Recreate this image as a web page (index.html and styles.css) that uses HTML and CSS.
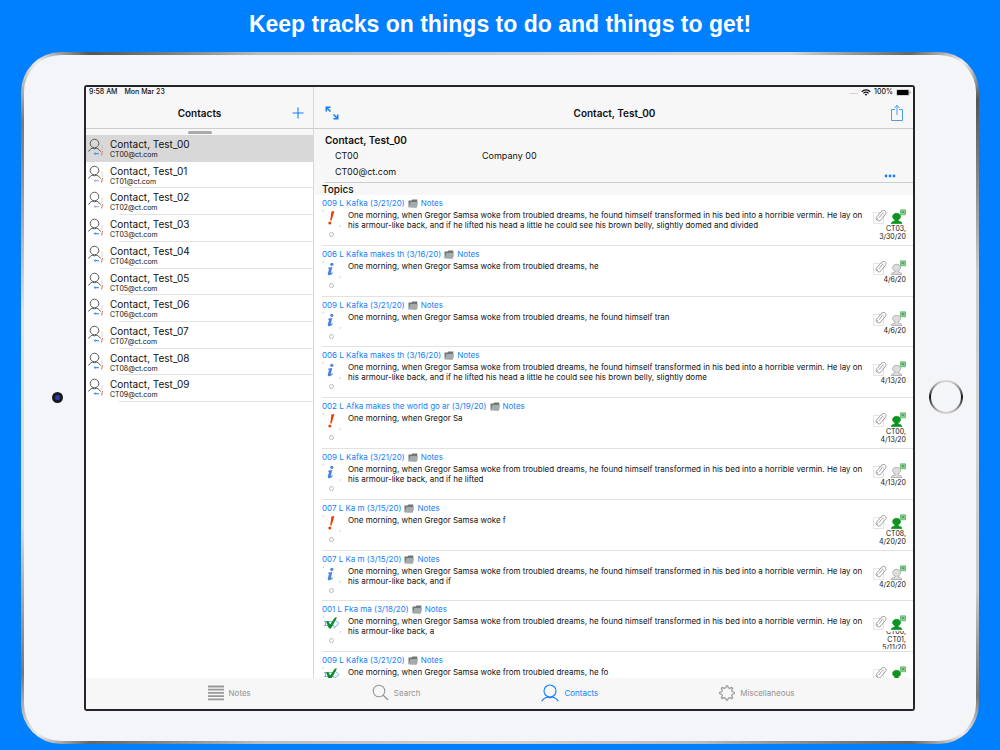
FILE: index.html
```html
<!DOCTYPE html>
<html lang="en">
<head>
<meta charset="utf-8">
<meta name="viewport" content="width=device-width, initial-scale=1">
<title>Contacts</title>
<link rel="stylesheet" href="styles.css">
</head>
<body>
<svg class="sprite" aria-hidden="true">
  <symbol id="contact" viewBox="0 0 17 20">
    <g fill="none" stroke="#4a4a4a" stroke-width="0.9"><circle cx="6.5" cy="5.500" r="4.300"/><path d="M.5 13.500c1.500-2.600 3.500-3.300 4.800-3.500M12.500 13.500c-1.500-2.600-3.500-3.300-4.800-3.500M4.800 10.300l1.700.6 1.700-.6"/></g>
    <path d="M14 7v5" stroke="#aaa" stroke-width=".5"/>
    <path d="M14.500 13l-1 4.500" stroke="#f4714f" stroke-width="1.100"/>
    <path d="M5.500 15.500l2-1.500v1H11v1.200H7.500v1z" fill="currentColor"/>
  </symbol>
  <symbol id="folder" viewBox="0 0 10 9"><path d="M.5 8V1.500h3l.8-1h5V7l-1 1.500z" fill="#6f7678"/><path d="M.5 8.500L2.500 3H10L8.500 8.500z" fill="#a4abad"/></symbol>
  <symbol id="urgent" viewBox="0 0 26 30"><path d="M1 3V1.500L2 1" fill="none" stroke="#bbb" stroke-width=".6"/><path d="M9.400 2.500l3-.5-2.800 9.500H8.200z" fill="#f23a08"/><circle cx="7.800" cy="14" r="1.500" fill="#f23a08"/><path d="M17 18l1.500-1v-1" fill="none" stroke="#bbb" stroke-width=".6"/><circle cx="9.500" cy="25.500" r="2" fill="none" stroke="#aaa" stroke-width=".8"/></symbol>
  <symbol id="info" viewBox="0 0 26 30"><path d="M1 3V1.500L2 1" fill="none" stroke="#bbb" stroke-width=".6"/><circle cx="9.800" cy="4.300" r="1.600" fill="#4b83dd"/><path d="M6.500 7.600L10.300 7 8.800 13.300l1.900-1 .2.800C9.500 14.700 8 15.500 6.700 15.300c-1.200-.2-1-1.400-.7-2.500l1.100-4.100H6z" fill="#4b83dd"/><path d="M17 18l1.500-1v-1" fill="none" stroke="#bbb" stroke-width=".6"/><circle cx="9.500" cy="25.500" r="2" fill="none" stroke="#aaa" stroke-width=".8"/></symbol>
  <symbol id="done" viewBox="0 0 26 30"><path d="M1 3V1.500L2 1" fill="none" stroke="#bbb" stroke-width=".6"/><path d="M2 6.500h10V4l5 4.500-5 4.500v-2.500H2M3.500 6.500v4" fill="#f8fbff" stroke="#74a4f0" stroke-width=".9"/><path d="M4 6.500L6.300 6l1.800 3.500L13 2.500h2L9 13.500H7z" fill="#0b8d20"/><path d="M17 18l1.500-1v-1" fill="none" stroke="#bbb" stroke-width=".6"/><circle cx="9.500" cy="25.500" r="2" fill="none" stroke="#aaa" stroke-width=".8"/></symbol>
  <symbol id="clip" viewBox="0 0 14 16"><path d="M.5 3.500h10v11H.5z" fill="none" stroke="#ddd" stroke-width=".8"/><path d="M6 8.800l3.600-4.600M4.200 11.300c-1.400-.8-1.300-2.200-.5-3.300l4.400-5.300c1.200-1.500 3-1.700 4.100-.8 1.100 1 .9 2.500 0 3.700L8 10.800c-1.100 1.300-2.600 1.400-3.300.7-.7-.8-.3-1.700.3-2.500" fill="none" stroke="#888" stroke-width=".8"/></symbol>
  <symbol id="person" viewBox="0 0 16 16"><path d="M1.200 14.500c.3-1.800 2.100-2 3.800-2.500v-1.200C3.200 9.900 2.600 8.900 2.600 7.800 2.600 5.700 4.400 4.300 6.600 4.300s4 1.400 4 3.500c0 1.100-.6 2.100-2.400 3V12c1.700.5 3.500.7 3.800 2.500z" fill="currentColor" stroke="var(--edge)" stroke-width=".7"/><path d="M10.500.8h5v5h-5z" fill="#8bd494" stroke="#52ae60" stroke-width=".7"/><path d="M11.700 2.200h2.600v1.900h-2.600z" fill="#5a9a68"/></symbol>
</svg>

<h1 class="headline">Keep tracks on things to do and things to get!</h1>
<div class="tablet">
  <div class="bezel">
    <div class="edge"><span class="camera"></span></div>
    <div class="screen">
      <div class="panes">
        <aside class="sidebar">
          <div class="status"><span>9:58 AM</span><span>Mon Mar 23</span></div>
          <div class="nav side-nav">
            <h2 class="nav-title">Contacts</h2>
            <button class="icon-button" aria-label="Add contact"><svg width="12" height="12" viewBox="0 0 12 12"><path d="M6 .5v11M.5 6h11" stroke="#147efb" stroke-width="1.100"/></svg></button>
          </div>
          <div class="grabber"><span></span></div>
          <ul class="contacts">
            <li class="contact selected"><svg class="contact-icon new"><use href="#contact"/></svg><a href="#"><b>Contact, Test_00</b><small>CT00@ct.com</small></a></li>
            <li class="contact"><svg class="contact-icon"><use href="#contact"/></svg><a href="#"><b>Contact, Test_01</b><small>CT01@ct.com</small></a></li>
            <li class="contact"><svg class="contact-icon"><use href="#contact"/></svg><a href="#"><b>Contact, Test_02</b><small>CT02@ct.com</small></a></li>
            <li class="contact"><svg class="contact-icon new"><use href="#contact"/></svg><a href="#"><b>Contact, Test_03</b><small>CT03@ct.com</small></a></li>
            <li class="contact"><svg class="contact-icon new"><use href="#contact"/></svg><a href="#"><b>Contact, Test_04</b><small>CT04@ct.com</small></a></li>
            <li class="contact"><svg class="contact-icon new"><use href="#contact"/></svg><a href="#"><b>Contact, Test_05</b><small>CT05@ct.com</small></a></li>
            <li class="contact"><svg class="contact-icon new"><use href="#contact"/></svg><a href="#"><b>Contact, Test_06</b><small>CT06@ct.com</small></a></li>
            <li class="contact"><svg class="contact-icon new"><use href="#contact"/></svg><a href="#"><b>Contact, Test_07</b><small>CT07@ct.com</small></a></li>
            <li class="contact"><svg class="contact-icon new"><use href="#contact"/></svg><a href="#"><b>Contact, Test_08</b><small>CT08@ct.com</small></a></li>
            <li class="contact"><svg class="contact-icon new"><use href="#contact"/></svg><a href="#"><b>Contact, Test_09</b><small>CT09@ct.com</small></a></li>
          </ul>
        </aside>
        <main class="detail">
          <div class="status status-right">
            <span class="dots">....</span>
            <svg width="10" height="7" viewBox="0 0 10 7"><path d="M.7 2.700a6.200 6.200 0 0 1 8.600 0M2.400 4.400a3.800 3.800 0 0 1 5.200 0" fill="none" stroke="#111" stroke-width="1.200"/><path d="M3.700 5.400a2 2 0 0 1 2.600 0L5 6.800z" fill="#111"/></svg>
            <span>100%</span>
            <svg width="15" height="7" viewBox="0 0 15 7"><rect x=".3" y=".3" width="13" height="6.400" rx="1.500" fill="none" stroke="#999" stroke-width=".5"/><rect x="1" y="1" width="11.600" height="5" rx=".8" fill="#000"/><path d="M14.200 2.500v2" stroke="#999"/></svg>
          </div>
          <div class="nav detail-nav">
            <button class="icon-button" aria-label="Expand"><svg width="14" height="14" viewBox="0 0 14 14"><g fill="none" stroke="#147efb" stroke-width="1.600"><path d="M1.300 5.500V1.300h4.200M1.500 1.500l4 4M12.700 8.500v4.200H8.500M12.500 12.500l-4-4"/></g></svg></button>
            <h2 class="nav-title">Contact, Test_00</h2>
            <button class="icon-button" aria-label="Share"><svg width="14" height="18" viewBox="0 0 14 18"><path d="M5 5.500H1.500v11h11v-11H9M7 11V1.500M4.500 4L7 1.300 9.500 4" fill="none" stroke="#4a9bf8" stroke-width="1"/></svg></button>
          </div>
          <section class="card">
            <h3>Contact, Test_00</h3>
            <div class="fields"><span>CT00</span><span>Company 00</span><span>CT00@ct.com</span></div>
            <button class="more" aria-label="More"><svg width="12" height="4" viewBox="0 0 12 4" fill="#147efb"><circle cx="2" cy="2" r="1.400"/><circle cx="6" cy="2" r="1.400"/><circle cx="10" cy="2" r="1.400"/></svg></button>
          </section>
          <h3 class="section-title">Topics</h3>
          <div class="topics-view"><ul class="topics">
            <li class="topic"><a class="topic-head" href="#">009 L Kafka (3/21/20) <svg class="folder"><use href="#folder"/></svg> Notes</a><svg class="kind"><use href="#urgent"/></svg><p>One morning, when Gregor Samsa woke from troubled dreams, he found himself transformed in his bed into a horrible vermin. He lay on his armour-like back, and if he lifted his head a little he could see his brown belly, slightly domed and divided</p><div class="meta"><div class="marks"><svg class="clip"><use href="#clip"/></svg><svg class="person active"><use href="#person"/></svg></div><div class="due">CT03,<br>3/30/20</div></div></li>
            <li class="topic"><a class="topic-head" href="#">006 L Kafka makes th (3/16/20) <svg class="folder"><use href="#folder"/></svg> Notes</a><svg class="kind"><use href="#info"/></svg><p>One morning, when Gregor Samsa woke from troubled dreams, he</p><div class="meta"><div class="marks"><svg class="clip"><use href="#clip"/></svg><svg class="person"><use href="#person"/></svg></div><div class="due">4/6/20</div></div></li>
            <li class="topic"><a class="topic-head" href="#">009 L Kafka (3/21/20) <svg class="folder"><use href="#folder"/></svg> Notes</a><svg class="kind"><use href="#info"/></svg><p>One morning, when Gregor Samsa woke from troubled dreams, he found himself tran</p><div class="meta"><div class="marks"><svg class="clip"><use href="#clip"/></svg><svg class="person"><use href="#person"/></svg></div><div class="due">4/6/20</div></div></li>
            <li class="topic"><a class="topic-head" href="#">006 L Kafka makes th (3/16/20) <svg class="folder"><use href="#folder"/></svg> Notes</a><svg class="kind"><use href="#info"/></svg><p>One morning, when Gregor Samsa woke from troubled dreams, he found himself transformed in his bed into a horrible vermin. He lay on his armour-like back, and if he lifted his head a little he could see his brown belly, slightly dome</p><div class="meta"><div class="marks"><svg class="clip"><use href="#clip"/></svg><svg class="person"><use href="#person"/></svg></div><div class="due">4/13/20</div></div></li>
            <li class="topic"><a class="topic-head" href="#">002 L Afka makes the world go ar (3/19/20) <svg class="folder"><use href="#folder"/></svg> Notes</a><svg class="kind"><use href="#urgent"/></svg><p>One morning, when Gregor Sa</p><div class="meta"><div class="marks"><svg class="clip"><use href="#clip"/></svg><svg class="person active"><use href="#person"/></svg></div><div class="due">CT00,<br>4/13/20</div></div></li>
            <li class="topic"><a class="topic-head" href="#">009 L Kafka (3/21/20) <svg class="folder"><use href="#folder"/></svg> Notes</a><svg class="kind"><use href="#info"/></svg><p>One morning, when Gregor Samsa woke from troubled dreams, he found himself transformed in his bed into a horrible vermin. He lay on his armour-like back, and if he lifted</p><div class="meta"><div class="marks"><svg class="clip"><use href="#clip"/></svg><svg class="person"><use href="#person"/></svg></div><div class="due">4/13/20</div></div></li>
            <li class="topic"><a class="topic-head" href="#">007 L Ka m (3/15/20) <svg class="folder"><use href="#folder"/></svg> Notes</a><svg class="kind"><use href="#urgent"/></svg><p>One morning, when Gregor Samsa woke f</p><div class="meta"><div class="marks"><svg class="clip"><use href="#clip"/></svg><svg class="person active"><use href="#person"/></svg></div><div class="due">CT08,<br>4/20/20</div></div></li>
            <li class="topic"><a class="topic-head" href="#">007 L Ka m (3/15/20) <svg class="folder"><use href="#folder"/></svg> Notes</a><svg class="kind"><use href="#info"/></svg><p>One morning, when Gregor Samsa woke from troubled dreams, he found himself transformed in his bed into a horrible vermin. He lay on his armour-like back, and if</p><div class="meta"><div class="marks"><svg class="clip"><use href="#clip"/></svg><svg class="person"><use href="#person"/></svg></div><div class="due">4/20/20</div></div></li>
            <li class="topic"><a class="topic-head" href="#">001 L Fka ma (3/18/20) <svg class="folder"><use href="#folder"/></svg> Notes</a><svg class="kind"><use href="#done"/></svg><p>One morning, when Gregor Samsa woke from troubled dreams, he found himself transformed in his bed into a horrible vermin. He lay on his armour-like back, a</p><div class="meta"><div class="marks"><svg class="clip"><use href="#clip"/></svg><svg class="person active"><use href="#person"/></svg></div><div class="due long"><span>CT00,<br>CT01,<br>5/11/20</span></div></div></li>
            <li class="topic"><a class="topic-head" href="#">009 L Kafka (3/21/20) <svg class="folder"><use href="#folder"/></svg> Notes</a><svg class="kind"><use href="#done"/></svg><p>One morning, when Gregor Samsa woke from troubled dreams, he fo</p><div class="meta"><div class="marks"><svg class="clip"><use href="#clip"/></svg><svg class="person active"><use href="#person"/></svg></div></div></li>
          </ul></div>
        </main>
      </div>
      <nav class="tabs">
        <button class="tab"><svg width="16" height="16" viewBox="0 0 16 16"><path d="M0 1.500h16M0 4.700h16M0 7.900h16M0 11.100h16M0 14.300h16" stroke="#999" stroke-width="1.800"/></svg>Notes</button>
        <button class="tab"><svg width="17" height="17" viewBox="0 0 17 17"><circle cx="7" cy="7" r="5.800" fill="none" stroke="#999" stroke-width="1.100"/><path d="M11 11l5 5" stroke="#999" stroke-width="1.400"/></svg>Search</button>
        <button class="tab current"><svg width="18" height="18" viewBox="0 0 18 18"><g fill="none" stroke="#147efb" stroke-width="1.100"><circle cx="9" cy="7" r="6"/><path d="M.7 17.300c1.800-3 4.500-4 6.300-4.300M17.300 17.300c-1.800-3-4.500-4-6.300-4.300M7 13l2 .8 2-.8"/></g></svg>Contacts</button>
        <button class="tab"><svg width="16" height="16" viewBox="0 0 16 16"><g fill="none" stroke="#999" stroke-width="1.200" stroke-linejoin="round"><path d="M6.700 2.800L7.300.8h1.400l.6 2 1.500.6 1.900-1 1 1-1 1.900.6 1.400 2 .6v1.400l-2 .6-.6 1.400 1 1.900-1 1-1.900-1-1.500.6-.6 2H7.300l-.6-2-1.500-.6-1.900 1-1-1 1-1.900-.6-1.400-2-.6V7.300l2-.6.6-1.400-1-1.900 1-1 1.900 1z"/></g></svg>Miscellaneous</button>
      </nav>
    </div>
    <div class="edge"><button class="home" aria-label="Home"></button></div>
  </div>
</div>
</body>
</html>
```
FILE: styles.css
```css
* { box-sizing: border-box; }
body {
  margin: 0;
  height: 100vh;
  display: flex;
  flex-direction: column;
  overflow: hidden;
  background: #007fff;
  color: #111;
  font-family: Inter, "Liberation Sans", sans-serif;
}
h1, h2, h3, p, ul { margin: 0; padding: 0; }
ul { list-style: none; }
a { color: inherit; text-decoration: none; }
button { padding: 0; border: 0; background: none; font: inherit; color: inherit; }
svg { display: block; flex: none; }
.sprite { position: absolute; width: 0; height: 0; }

.headline {
  flex: none;
  height: 52px;
  padding-top: 10px;
  color: #fff;
  font: bold 23px/28px "Liberation Sans", sans-serif;
  text-align: center;
}
.tablet {
  flex: 1;
  min-height: 0;
  margin: 0 21px 6px;
  padding: 3px;
  border-radius: 40px;
  background: conic-gradient(#c9cccf 0deg, #d9d9d9 40deg, #666 50deg, #eee 54deg, #555 58deg, #ccc 75deg, #d8d5d1 90deg, #ccc 112deg, #777 122deg, #eee 126deg, #666 130deg, #bbb 150deg, #d5d3ce 180deg, #bbb 215deg, #666 230deg, #eee 234deg, #777 240deg, #d8dadd 255deg, #dfe3ee 280deg, #777 300deg, #eee 306deg, #555 310deg, #bbb 325deg, #c9cccf 360deg);
}
.bezel {
  height: 100%;
  display: grid;
  grid-template-columns: 60px minmax(0, 1fr) 61px;
  padding: 30px 0;
  border-radius: 37px;
  background: #f4f5f8;
}
.edge { display: flex; align-items: center; justify-content: center; padding-bottom: 2px; }
.camera {
  width: 11px;
  height: 11px;
  margin-left: 6px;
  border-radius: 50%;
  border: 3px solid #17191f;
  background: #2c37b4;
}
.home {
  width: 34px;
  height: 34px;
  border-radius: 50%;
  border: 2px solid transparent;
  background: linear-gradient(#f4f5f8, #f4f5f8) padding-box, linear-gradient(#e4dfdf, #888 25%, #111 50%, #777 75%, #e4dfdf) border-box;
}
.screen {
  min-height: 0;
  display: flex;
  flex-direction: column;
  border: 2px solid #25262a;
  border-radius: 3px;
  background: #fff;
  overflow: hidden;
}
.panes { flex: 1; min-height: 0; display: grid; grid-template-columns: 228px minmax(0, 1fr); }
.sidebar { border-right: 1px solid #d8d8d8; }
.detail { min-height: 0; display: flex; flex-direction: column; }

.status {
  flex: none;
  display: flex;
  align-items: center;
  gap: 7px;
  height: 10px;
  padding: 0 3px;
  background: #f7f7f7;
  font-size: 7px;
  font-weight: 500;
  line-height: 10px;
}
.status-right { justify-content: flex-end; gap: 3px; padding-right: 2px; }
.dots { color: #999; }
.nav {
  flex: none;
  display: grid;
  align-items: center;
  height: 32px;
  background: #f7f7f7;
  border-bottom: 1px solid #ccc;
}
.side-nav { grid-template-columns: 20px 1fr 20px; padding: 0 5px; }
.side-nav .nav-title { grid-column: 2; }
.detail-nav { grid-template-columns: 14px 1fr 14px; padding: 0 9px 0 11px; }
.nav-title { font-size: 10px; font-weight: 600; line-height: 14px; text-align: center; }
.icon-button { display: flex; justify-content: center; }

.grabber { height: 6px; background: #f7f7f7; display: flex; justify-content: center; align-items: center; }
.grabber span { width: 24px; height: 3px; border-radius: 2px; background: #aaa; }
.contacts { display: flex; flex-direction: column; height: 267px; }
.contact { flex: 1; display: flex; padding-left: 2px; line-height: 12px; background: linear-gradient(#e2e2e2, #e2e2e2) 33px 100% / 100% 1px no-repeat; }
.contact.selected { background: #d8d8d8; }
.contact-icon { width: 17px; height: 20px; margin-top: 3px; color: #aab4c0; }
.contact-icon.new { color: #4f93f5; }
.contact a { flex: 1; margin-left: 5px; padding-top: 3px; }
.contact b, .contact small { display: block; }
.contact b { font-size: 10px; font-weight: 400; }
.contact small { font-size: 7px; line-height: 9px; }

.card { position: relative; flex: none; padding: 4px 0 0 11px; height: 54px; background: linear-gradient(#ccc, #ccc) 11px 100% / 100% 1px no-repeat #f7f7f7; }
.card h3 { font-size: 10px; font-weight: 600; line-height: 14px; }
.fields { display: grid; grid-template-columns: 147px 1fr; padding: 1px 0 0 10px; font-size: 9px; line-height: 16px; }
.more { position: absolute; right: 17px; bottom: 5px; }
.section-title { flex: none; padding-left: 8px; background: #f7f7f7; font-size: 10px; font-weight: 500; line-height: 12px; }

.topics-view { flex: 1; min-height: 0; overflow: hidden; }
.topics { display: flex; flex-direction: column; height: 508px; }
.topic {
  flex: 1;
  display: grid;
  grid-template-columns: 26px minmax(0, 1fr) 46px;
  grid-template-rows: 13px minmax(0, 1fr);
  margin-left: 8px;
  padding-top: 2px;
  border-bottom: 1px solid #e2e2e2;
}
.topic-head { grid-column: 1 / -1; display: flex; align-items: center; gap: 3px; color: #147efb; font-size: 8px; line-height: 13px; }
.folder { width: 10px; height: 9px; }
.kind { width: 26px; height: 30px; margin-top: -1px; }
.topic p { font-size: 8px; line-height: 10px; }
.meta { margin-top: -1px; padding-right: 7px; }
.marks { display: flex; justify-content: flex-end; gap: 3px; }
.clip { width: 14px; height: 16px; }
.person { width: 16px; height: 16px; color: #ddd; --edge: #999; }
.person.active { color: #0b9420; --edge: #0b9420; }
.due { height: 18px; overflow: hidden; font-size: 7px; line-height: 8px; text-align: right; }
.due.long { display: flex; flex-direction: column; justify-content: center; }

.tabs { flex: none; display: flex; justify-content: center; gap: 121px; height: 31px; padding: 0 0 2px 3px; background: #f7f7f7; }
.tab { display: flex; align-items: center; gap: 5px; color: #929292; font-size: 8px; }
.tab.current { color: #147efb; }
```
